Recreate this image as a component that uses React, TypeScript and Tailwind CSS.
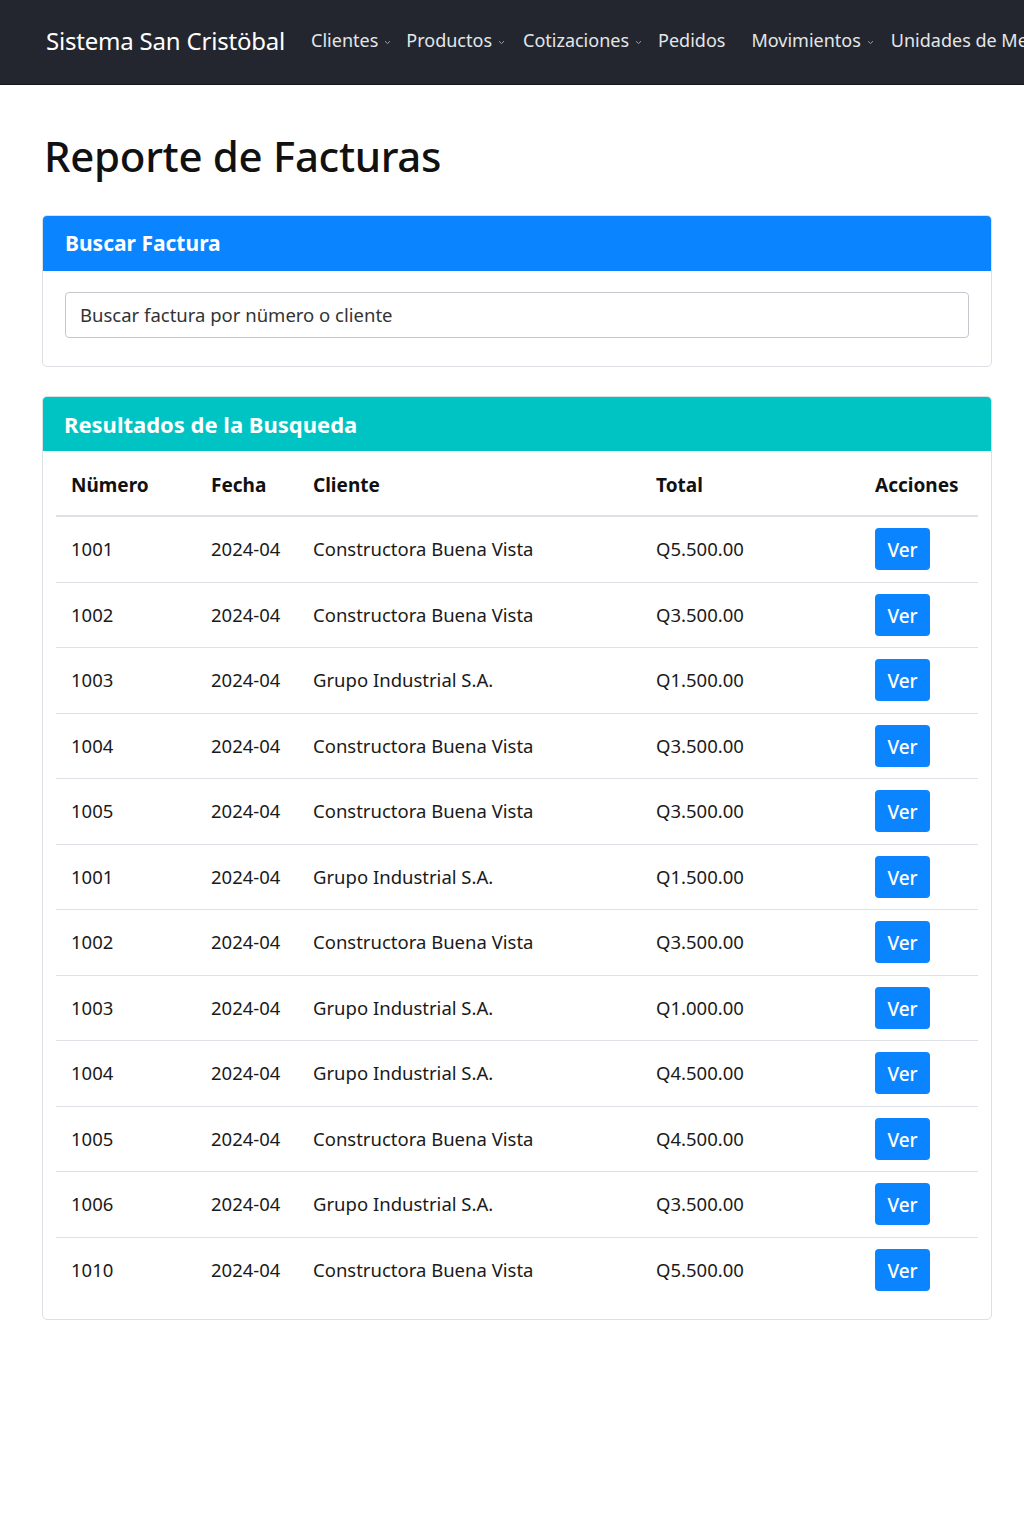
import React from "react";

const rows = [
  ["1001", "2024-04", "Constructora Buena Vista", "Q5.500.00"],
  ["1002", "2024-04", "Constructora Buena Vista", "Q3.500.00"],
  ["1003", "2024-04", "Grupo Industrial S.A.", "Q1.500.00"],
  ["1004", "2024-04", "Constructora Buena Vista", "Q3.500.00"],
  ["1005", "2024-04", "Constructora Buena Vista", "Q3.500.00"],
  ["1001", "2024-04", "Grupo Industrial S.A.", "Q1.500.00"],
  ["1002", "2024-04", "Constructora Buena Vista", "Q3.500.00"],
  ["1003", "2024-04", "Grupo Industrial S.A.", "Q1.000.00"],
  ["1004", "2024-04", "Grupo Industrial S.A.", "Q4.500.00"],
  ["1005", "2024-04", "Constructora Buena Vista", "Q4.500.00"],
  ["1006", "2024-04", "Grupo Industrial S.A.", "Q3.500.00"],
  ["1010", "2024-04", "Constructora Buena Vista", "Q5.500.00"],
];

function Caret() {
  return (
    <svg width="7" height="5" viewBox="0 0 7 5" className="ml-[6px] mt-[3px]">
      <path d="M1 1.2 L3.5 3.6 L6 1.2" fill="none" stroke="#9aa0a6" strokeWidth="1" />
    </svg>
  );
}

function NavItem({ label, caret, className = "" }: { label: string; caret?: boolean; className?: string }) {
  return (
    <div className={"flex items-center text-[18px] text-[#e4e6ea] shrink-0 " + className}>
      <span>{label}</span>
      {caret && <Caret />}
    </div>
  );
}

export default function App() {
  return (
    <div className="min-h-[1536px] bg-white" style={{ fontFamily: '"Noto Sans", "Open Sans", sans-serif' }}>
      <nav className="h-[85px] bg-[#23262e] flex items-center pl-[46px] pb-[3px] overflow-hidden whitespace-nowrap border-b border-[#15171b]">
        <div className="text-[24px] text-white mr-[26px] tracking-[-0.2px] shrink-0">Sistema San Cristöbal</div>
        <NavItem label="Clientes" caret className="mr-[15px]" />
        <NavItem label="Productos" caret className="mr-[18px]" />
        <NavItem label="Cotizaciones" caret className="mr-[16px]" />
        <NavItem label="Pedidos" className="mr-[26px]" />
        <NavItem label="Movimientos" caret className="mr-[17px]" />
        <NavItem label="Unidades de Medida" />
      </nav>

      <div className="pl-[42px] pr-[32px]">
        <h1 className="text-[42px] leading-none font-medium text-[#111] pl-[2px] tracking-[-0.3px]" style={{ marginTop: 50 }}>
          Reporte de Facturas
        </h1>

        <div className="mt-[38px] border border-[#dcdfe3] rounded-[5px] overflow-hidden">
          <div className="h-[55px] bg-[#0a84ff] flex items-center pl-[22px] text-white text-[21px] font-bold">
            Buscar Factura
          </div>
          <div className="px-[22px] pt-[21px] pb-[28px]">
            <div className="h-[46px] border border-[#c4c8cd] rounded-[4px] flex items-center pl-[14px] text-[18.5px] text-[#333]">
              Buscar factura por nümero o cliente
            </div>
          </div>
        </div>

        <div className="mt-[29px] border border-[#dcdfe3] rounded-[5px] overflow-hidden">
          <div className="h-[54px] bg-[#00c4c4] flex items-center pl-[21px] text-white text-[22px] font-bold">
            Resultados de la Busqueda
          </div>
          <div className="px-[13px] pb-[16px]">
            <div className="grid grid-cols-[140px_102px_343px_219px_1fr] h-[66px] items-center border-b-2 border-[#dee2e6] pl-[15px] pt-[5px] text-[19px] font-bold text-[#111]">
              <div>Nümero</div>
              <div>Fecha</div>
              <div>Cliente</div>
              <div>Total</div>
              <div>Acciones</div>
            </div>
            {rows.map((r, i) => (
              <div
                key={i}
                className={
                  "grid grid-cols-[140px_102px_343px_219px_1fr] h-[65.5px] items-center pl-[15px] text-[18.5px] text-[#1a1a1a] " +
                  (i < rows.length - 1 ? "border-b border-[#dee2e6]" : "")
                }
              >
                <div>{r[0]}</div>
                <div>{r[1]}</div>
                <div>{r[2]}</div>
                <div>{r[3]}</div>
                <div>
                  <button className="w-[55px] h-[42px] bg-[#0a84ff] rounded-[4px] text-white text-[19px] font-medium flex items-center justify-center pt-[2px]">
                    Ver
                  </button>
                </div>
              </div>
            ))}
          </div>
        </div>
      </div>
    </div>
  );
}
